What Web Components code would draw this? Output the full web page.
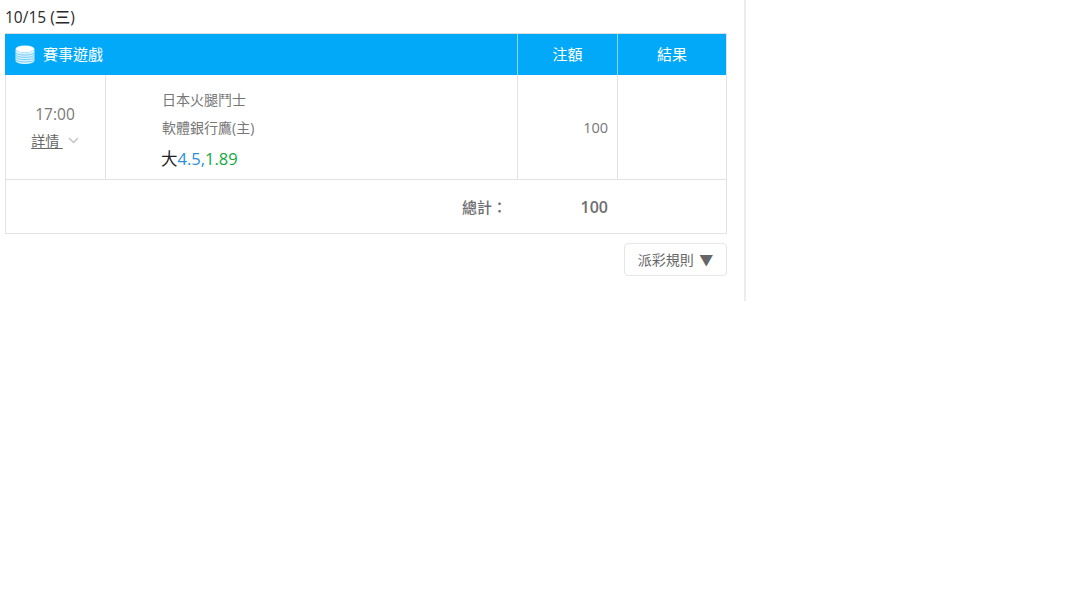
<!DOCTYPE html>
<html lang="zh-Hant">
<head>
<meta charset="utf-8">
<title>注單</title>
<style>
  html, body { margin: 0; background: #fff; }
</style>
</head>
<body>
<bet-panel date="10/15 (三)">
  <bet-table total="100">
    <bet-row time="17:00" league="日本火腿鬥士" team="軟體銀行鷹(主)" pick="大" line="4.5" odds="1.89" amount="100"></bet-row>
  </bet-table>
  <rule-button slot="actions">派彩規則 ▼</rule-button>
</bet-panel>

<script>
// Shared font stack for every shadow root
const FONT = '"Open Sans", "Noto Sans CJK TC", sans-serif';

class BetPanel extends HTMLElement {
  constructor() {
    super();
    this.attachShadow({ mode: 'open' });
  }

  connectedCallback() {
    this.shadowRoot.innerHTML = `
      <style>
        :host {
          display: block;
          box-sizing: border-box;
          width: 746px;
          height: 301px;
          padding: 0 17px 0 5px;
          border-right: 2px solid #ececec;
          font-family: ${FONT};
        }
        .date {
          height: 33px;
          line-height: 34px;
          font-size: 15.5px;
          font-weight: 500;
          color: #2a2a2a;
        }
        .actions {
          display: flex;
          justify-content: flex-end;
          margin-top: 9px;
        }
      </style>
      <div class="date">${this.getAttribute('date') || ''}</div>
      <slot></slot>
      <div class="actions"><slot name="actions"></slot></div>
    `;
  }
}

class BetTable extends HTMLElement {
  constructor() {
    super();
    this.attachShadow({ mode: 'open' });
  }

  connectedCallback() {
    this.shadowRoot.innerHTML = `
      <style>
        :host {
          display: block;
          box-sizing: border-box;
          width: 722px;
          border: 1px solid #e3e3e3;
          border-top-color: #dcdcdc;
        }
        .head {
          display: grid;
          grid-template-columns: 513px 100px 1fr;
          height: 41px;
          margin-left: -1px;
          background: #03a9f9;
          color: #fff;
          font-size: 15px;
        }
        .head > div {
          display: flex;
          align-items: center;
          justify-content: center;
          padding-bottom: 2px;
          box-sizing: border-box;
          border-right: 1px solid #8fd5f7;
        }
        .head > div:first-child {
          justify-content: flex-start;
          gap: 8px;
          padding-left: 10px;
        }
        .head > div:last-child { border-right: 0; }
        svg { display: block; }
        .total {
          display: grid;
          grid-template-columns: 512px 90px;
          height: 53px;
          align-items: center;
          border-top: 1px solid #e3e3e3;
          color: #6e6e6e;
          font-size: 15px;
          font-weight: 500;
        }
        .total .label { text-align: right; padding-right: 11px; }
        .total .sum { text-align: right; font-size: 16px; font-weight: 600; }
      </style>
      <div class="head">
        <div>
          <svg width="20" height="20" viewBox="0 0 20 20" style="margin-top:2px">
            <ellipse cx="10" cy="4" rx="9.500" ry="3.500" fill="#fff"/>
            <path d="M.5 4v11.500c0 2 4.200 3.500 9.500 3.500s9.500-1.500 9.500-3.500V4c0 2-4.200 3.500-9.500 3.500S.5 6 .5 4z" fill="#fff" opacity=".85"/>
            <path d="M.5 7c0 2 4.200 3 9.500 3s9.500-1 9.500-3M.5 9.300c0 2 4.200 3 9.500 3s9.500-1 9.500-3M.5 11.600c0 2 4.200 3 9.500 3s9.500-1 9.500-3M.5 13.900c0 2 4.200 3 9.500 3s9.500-1 9.500-3" fill="none" stroke="#58c2f8" stroke-width=".8"/>
          </svg>
          <span>賽事遊戲</span>
        </div>
        <div>注額</div>
        <div>結果</div>
      </div>
      <slot></slot>
      <div class="total">
        <div class="label">總計：</div>
        <div class="sum">${this.getAttribute('total') || ''}</div>
      </div>
    `;
  }
}

class BetRow extends HTMLElement {
  constructor() {
    super();
    this.attachShadow({ mode: 'open' });
  }

  connectedCallback() {
    const attr = (name) => this.getAttribute(name) || '';
    this.shadowRoot.innerHTML = `
      <style>
        :host {
          display: grid;
          grid-template-columns: 100px 412px 100px 1fr;
          height: 104px;
          color: #777;
          font-size: 14px;
        }
        .cell { border-right: 1px solid #e3e3e3; }
        .cell:last-child { border-right: 0; }
        .time {
          display: flex;
          flex-direction: column;
          align-items: center;
          padding-top: 28px;
          padding-right: 1px;
          box-sizing: border-box;
        }
        .clock { font-size: 15.5px; line-height: 23px; color: #777; }
        .detail {
          display: flex;
          align-items: center;
          gap: 5px;
          margin-top: 4px;
          font-size: 14px;
          color: #666;
        }
        .detail u { text-underline-offset: 2px; white-space: pre; }
        .game {
          padding: 11px 0 0 56px;
          line-height: 28px;
        }
        .pick { font-size: 16.5px; line-height: 34px; color: #222; margin-left: -1px; }
        .line { color: #2a8fd8; }
        .odds { color: #12a93f; }
        .amount {
          display: flex;
          align-items: center;
          justify-content: flex-end;
          padding-right: 9px;
          font-size: 14.5px;
        }
      </style>
      <div class="cell time">
        <div class="clock">${attr('time')}</div>
        <div class="detail">
          <u>詳情 </u>
          <svg width="11" height="7" viewBox="0 0 11 7"><path d="M1 1l4.500 4.500L10 1" fill="none" stroke="#c4c4c4" stroke-width="1.500"/></svg>
        </div>
      </div>
      <div class="cell game">
        <div>${attr('league')}</div>
        <div>${attr('team')}</div>
        <div class="pick">${attr('pick')}<span class="line">${attr('line')},</span><span class="odds">${attr('odds')}</span></div>
      </div>
      <div class="cell amount">${attr('amount')}</div>
      <div class="cell"></div>
    `;
  }
}

class RuleButton extends HTMLElement {
  constructor() {
    super();
    this.attachShadow({ mode: 'open' });
  }

  connectedCallback() {
    this.shadowRoot.innerHTML = `
      <style>
        :host {
          display: flex;
          align-items: center;
          justify-content: center;
          box-sizing: border-box;
          width: 103px;
          height: 33px;
          padding-bottom: 2px;
          border: 1px solid #e6e6e6;
          border-radius: 4px;
          color: #666;
          font-size: 14px;
          word-spacing: 2px;
        }
      </style>
      <slot></slot>
    `;
  }
}

customElements.define('bet-panel', BetPanel);
customElements.define('bet-table', BetTable);
customElements.define('bet-row', BetRow);
customElements.define('rule-button', RuleButton);
</script>
</body>
</html>
